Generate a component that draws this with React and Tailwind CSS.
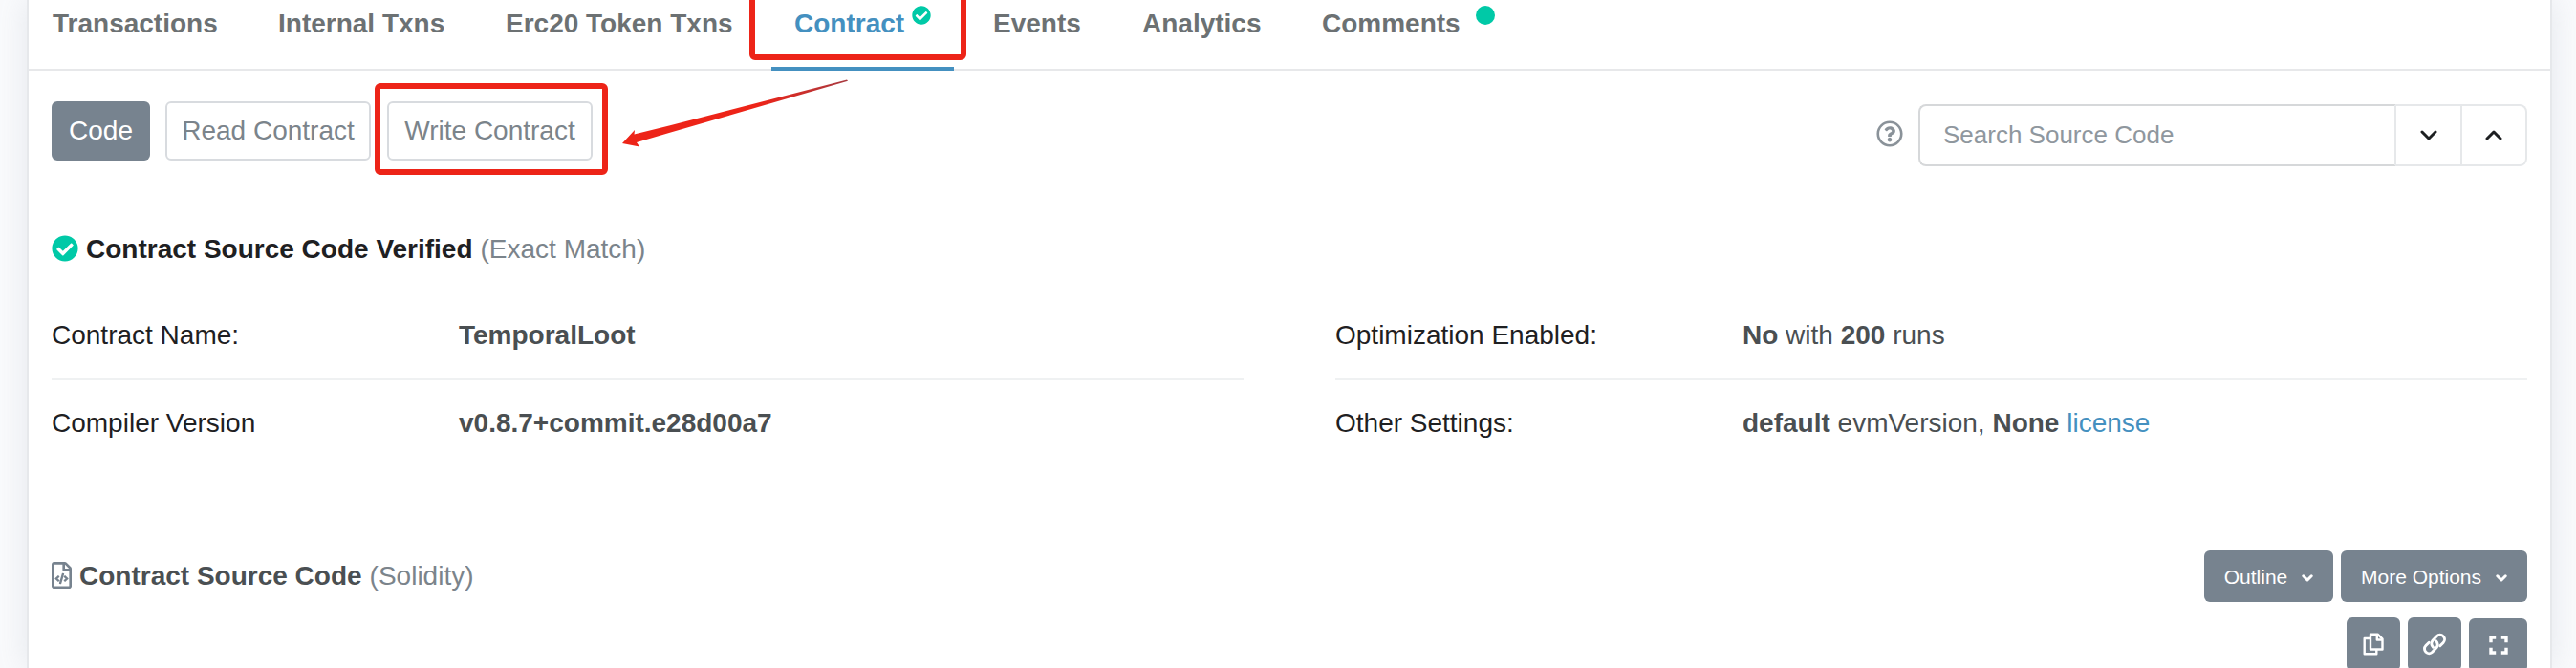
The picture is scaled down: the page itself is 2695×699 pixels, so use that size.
import React, { useState } from 'react';
import { FaCheckCircle, FaRegQuestionCircle, FaRegFileCode } from 'react-icons/fa';

const TABS = [
  { name: 'Transactions', className: 'w-[236px]' },
  { name: 'Internal Txns', className: 'w-[238px]' },
  { name: 'Erc20 Token Txns', className: 'w-[302px]' },
  { name: 'Contract', className: 'w-[208px]', verified: true },
  { name: 'Events', className: 'w-[156px]' },
  { name: 'Analytics', className: 'w-[188px]' },
  { name: 'Comments', className: 'w-[220px]', dot: true },
];

const ICON_BUTTON = 'flex h-14 items-center justify-center rounded-md bg-[#77838f] text-white';

function Chevron({ className }) {
  return (
    <svg className={className} viewBox="0 0 18 11" fill="none" stroke="currentColor" strokeWidth="3" strokeLinecap="round" strokeLinejoin="round">
      <path d="M2 2l7 7 7-7" />
    </svg>
  );
}

function SmallChevron() {
  return (
    <svg className="mt-0.5 h-2 w-3" viewBox="0 0 12 8" fill="none" stroke="currentColor" strokeWidth="3" strokeLinecap="round" strokeLinejoin="round">
      <path d="M1.8 1.8L6 6l4.200-4.200" />
    </svg>
  );
}

function CopyIcon() {
  return (
    <svg width="22" height="24" viewBox="0 0 22 24" fill="none" stroke="currentColor" strokeWidth="2.4" strokeLinejoin="round">
      <path d="M8 1.700h7.500l5 5v10.800H8z" />
      <path d="M14.800 1.700v5.800h5.700" />
      <path d="M8 6H1.700v16.300h12.600v-4.800" />
    </svg>
  );
}

function LinkIcon() {
  return (
    <svg width="24" height="24" viewBox="0 0 24 24" fill="none" stroke="currentColor" strokeWidth="2.9" strokeLinecap="round">
      <path d="M10.600 15.300a4.900 4.900 0 0 1-.6-7l4.300-4.600a4.800 4.800 0 0 1 6.800 6.800l-3.300 3.300" />
      <path d="M13.400 8.700a4.900 4.900 0 0 1 .6 7l-4.300 4.600a4.800 4.800 0 0 1-6.800-6.800l3.300-3.300" />
    </svg>
  );
}

function ExpandIcon() {
  return (
    <svg width="20" height="20" viewBox="0 0 20 20" fill="none" stroke="currentColor" strokeWidth="3.4">
      <path d="M2 7.200V2h5.200M12.800 2H18v5.200M18 12.800V18h-5.200M7.200 18H2v-5.200" />
    </svg>
  );
}

function InfoRow({ label, children, last }) {
  return (
    <div className={last ? 'flex h-[92px] items-center pb-0.5' : 'flex h-[92px] items-center border-b-2 border-[#eff1f2]'}>
      <div className="w-[426px] text-[#1e2022]">{label}</div>
      <div className="text-[#4a4f52]">{children}</div>
    </div>
  );
}

export default function App() {
  const [active, setActive] = useState('Contract');
  const [search, setSearch] = useState('');

  return (
    <div className="relative h-[699px] w-[2695px] overflow-hidden bg-[#f9fafc] pr-[25px] pl-7 font-['Liberation_Sans',Arial,sans-serif] text-[28px] leading-9">
      <div className="h-full border-x-2 border-[#e6e8eb] bg-white shadow-[0_0_30px_rgba(140,152,164,0.18)]">
        <nav className="flex h-[74px] border-b-2 border-[#e7e8ea] pl-[25px] font-bold">
          {TABS.map((tab) => (
            <div key={tab.name} className={tab.className}>
              <button
                onClick={() => setActive(tab.name)}
                className={active === tab.name ? 'flex h-[74px] text-[#4490c0]' : 'flex h-[74px] text-[#6c7173]'}
              >
                <span className="mt-[7px]">{tab.name}</span>
                {tab.verified && <FaCheckCircle className="mt-1.5 ml-2 size-5 text-[#00c9a7]" />}
                {tab.dot && <span className="mt-1.5 ml-4 size-5 rounded-full bg-[#00c9a7]" />}
              </button>
            </div>
          ))}
        </nav>

        <main className="px-6">
          <div className="flex items-start justify-between pt-8">
            <div className="flex">
              <button className="mr-4 h-[62px] w-[103px] rounded-md bg-[#77838f] text-white">Code</button>
              <button className="mr-[17px] h-[62px] w-[215px] rounded-md border-2 border-[#d8dbdf] whitespace-nowrap text-[#7b848b]">Read Contract</button>
              <button className="h-[62px] w-[215px] rounded-md border-2 border-[#d8dbdf] whitespace-nowrap text-[#7b848b]">Write Contract</button>
            </div>
            <div className="mt-[3px] flex items-center">
              <FaRegQuestionCircle className="mr-4 mb-1 size-7 text-[#8a9299]" />
              <input
                value={search}
                onChange={(e) => setSearch(e.target.value)}
                placeholder="Search Source Code"
                className="h-[65px] w-[500px] rounded-l-lg border-2 border-[#d6d8da] border-r-[#e6e8ea] px-6 text-[26px] placeholder:text-[#8f979e]"
              />
              <button aria-label="Next match" className="flex h-[65px] w-[69px] items-center justify-center border-y-2 border-r-2 border-[#e6e8ea] text-[#1e2022]">
                <Chevron className="h-[11px] w-[18px]" />
              </button>
              <button aria-label="Previous match" className="flex h-[65px] w-[68px] items-center justify-center rounded-r-lg border-y-2 border-r-2 border-[#e6e8ea] text-[#1e2022]">
                <Chevron className="h-[11px] w-[18px] rotate-180" />
              </button>
            </div>
          </div>

          <h3 className="mt-[68px] flex h-9 items-center">
            <FaCheckCircle className="mr-2 size-7 text-[#00c9a7]" />
            <b className="mr-2 pt-0.5 text-[#1e2022]">Contract Source Code Verified</b>
            <span className="pt-0.5 text-[#7b848b]">(Exact Match)</span>
          </h3>

          <div className="mt-7 grid grid-cols-2 gap-24">
            <div>
              <InfoRow label="Contract Name:"><b>TemporalLoot</b></InfoRow>
              <InfoRow label="Compiler Version" last><b>v0.8.7+commit.e28d00a7</b></InfoRow>
            </div>
            <div>
              <InfoRow label="Optimization Enabled:"><b>No</b> with <b>200</b> runs</InfoRow>
              <InfoRow label="Other Settings:" last>
                <b>default</b> evmVersion, <b>None</b> <a href="#license" className="text-[#4490c0]">license</a>
              </InfoRow>
            </div>
          </div>

          <div className="mt-[86px] flex items-start justify-between">
            <h4 className="flex h-[54px] items-center">
              <FaRegFileCode className="mr-2 mb-0.5 h-7 w-[21px] text-[#77838f]" />
              <b className="mr-2 text-[#4a4f52]">Contract Source Code</b>
              <span className="text-[#7b848b]">(Solidity)</span>
            </h4>
            <div className="flex flex-col items-end gap-4 text-[21px]">
              <div className="flex gap-2">
                <button className="flex h-[54px] w-[135px] items-center justify-center gap-[15px] rounded-md bg-[#77838f] pt-0.5 text-white">
                  Outline <SmallChevron />
                </button>
                <button className="flex h-[54px] w-[195px] items-center justify-center gap-[15px] rounded-md bg-[#77838f] pt-0.5 whitespace-nowrap text-white">
                  More Options <SmallChevron />
                </button>
              </div>
              <div className="flex gap-2">
                <button aria-label="Copy" className={`${ICON_BUTTON} w-14`}><CopyIcon /></button>
                <button aria-label="Link" className={`${ICON_BUTTON} w-14`}><LinkIcon /></button>
                <button aria-label="Expand" className={`${ICON_BUTTON} mt-px w-[61px]`}><ExpandIcon /></button>
              </div>
            </div>
          </div>
        </main>
      </div>

      {/* active tab underline, sits on the nav border */}
      <div className="absolute top-[70px] left-[807px] h-1 w-[191px] bg-[#4490c0]" />

      {/* highlight marks over the tab and the button */}
      <div className="absolute -top-2 left-[784px] h-[71px] w-[227px] rounded-md border-[6px] border-[#ed2418]" />
      <div className="absolute top-[87px] left-[392px] h-24 w-[244px] rounded-md border-[6px] border-[#ed2418]" />
      <svg className="absolute top-[80px] left-[640px]" width="260" height="80" viewBox="0 0 260 80">
        <defs>
          <linearGradient id="tail" x1="0" x2="1">
            <stop offset="0.6" stopColor="#ed2418" />
            <stop offset="1" stopColor="#a83a40" />
          </linearGradient>
        </defs>
        <path d="M11 70 L24 56 L23.500 60.500 L60 51.500 L246 3.500 L247 4.800 L60 59 L26 69 L29 73.500 Z" fill="url(#tail)" />
      </svg>
    </div>
  );
}
